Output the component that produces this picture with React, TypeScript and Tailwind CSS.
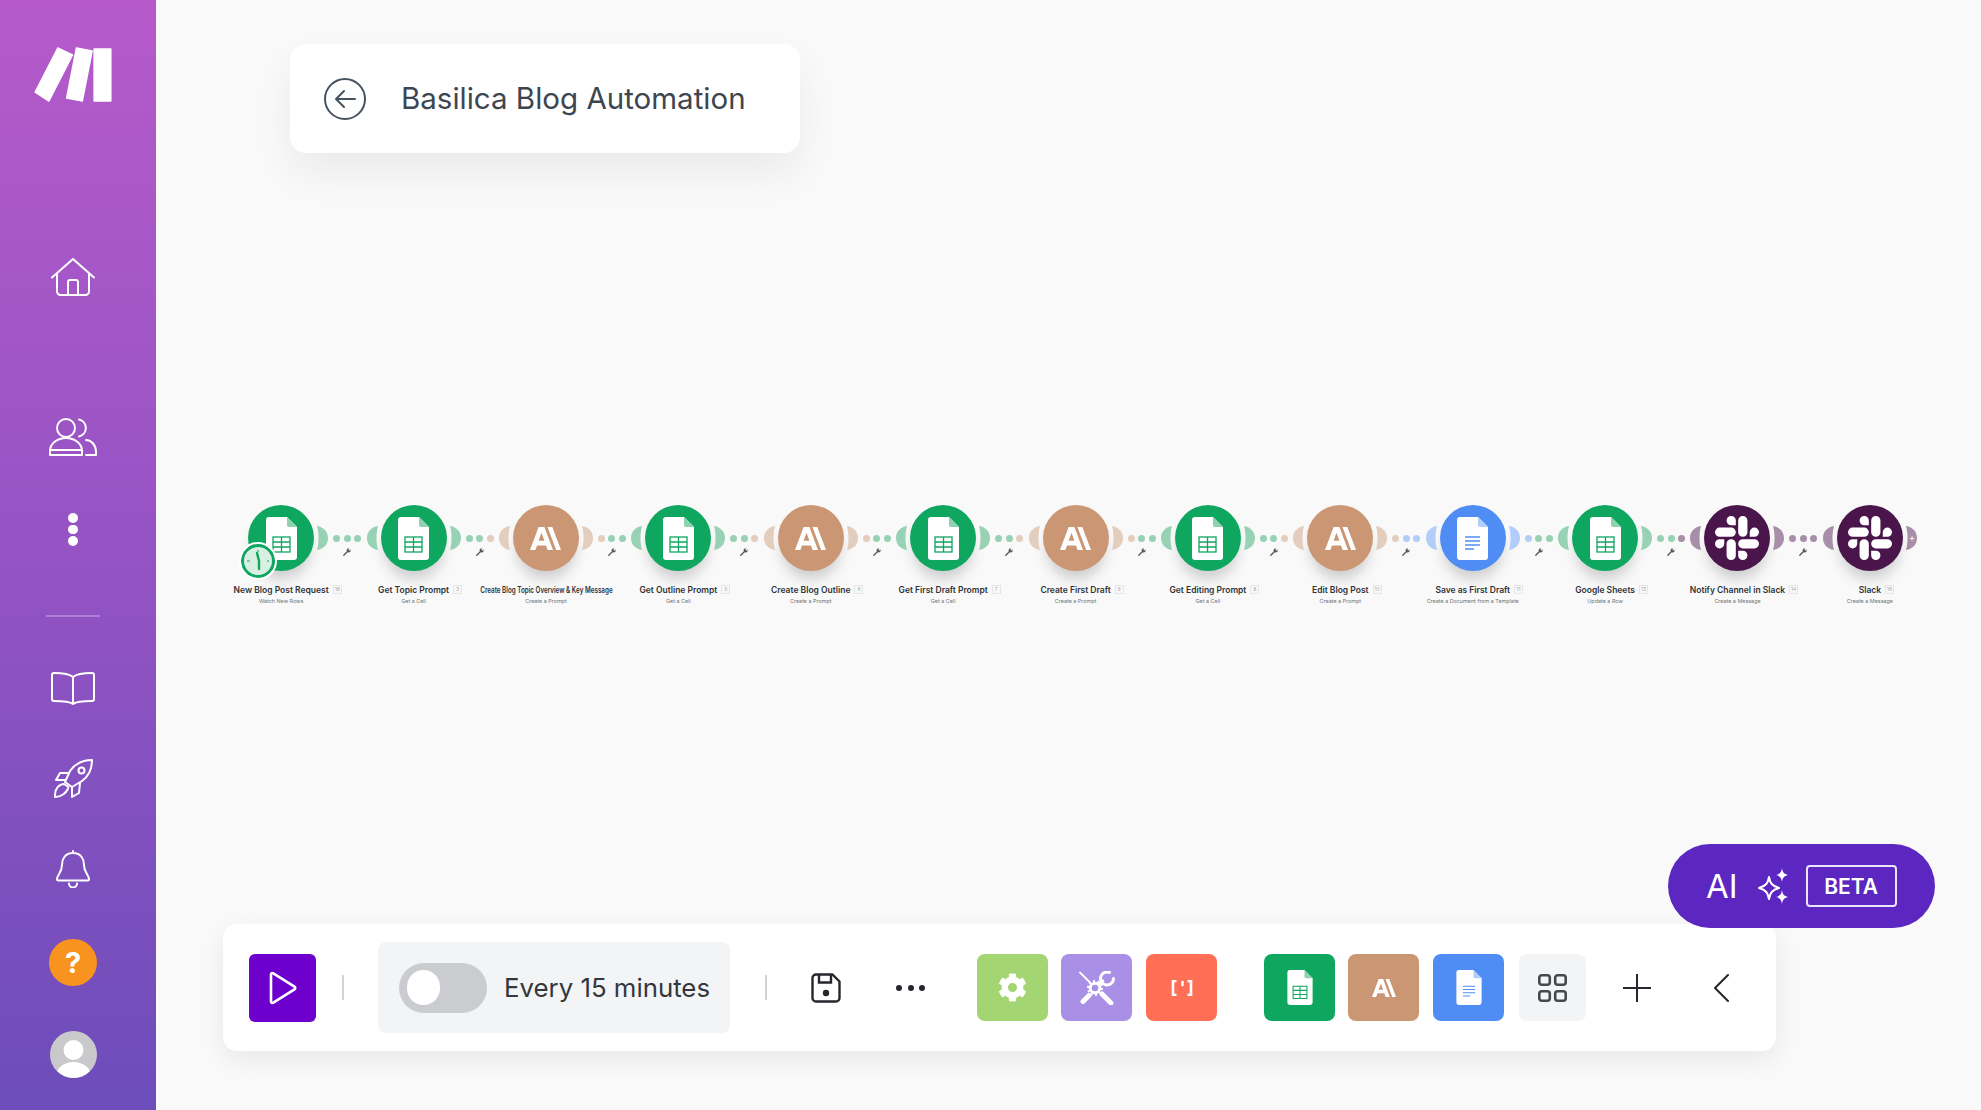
import { FaCog } from "react-icons/fa";
import { SiSlack } from "react-icons/si";

type Kind = "sheets" | "anthropic" | "docs" | "slack";

const KINDS: Record<Kind, { bg: string; light: string; fill: string }> = {
  sheets: { bg: "bg-[#0fa660]", light: "bg-[#98d2b4]", fill: "fill-[#98d2b4]" },
  anthropic: { bg: "bg-[#ca9673]", light: "bg-[#e3cdbd]", fill: "fill-[#e3cdbd]" },
  docs: { bg: "bg-[#4f8df5]", light: "bg-[#b3cdf9]", fill: "fill-[#b3cdf9]" },
  slack: { bg: "bg-[#4a154b]", light: "bg-[#a88fa9]", fill: "fill-[#a88fa9]" },
};

const modules: { title: string; sub: string; badge?: string; kind: Kind; narrow?: boolean }[] = [
  { title: "New Blog Post Request", sub: "Watch New Rows", badge: "18", kind: "sheets" },
  { title: "Get Topic Prompt", sub: "Get a Cell", badge: "3", kind: "sheets" },
  { title: "Create Blog Topic Overview & Key Message", sub: "Create a Prompt", kind: "anthropic", narrow: true },
  { title: "Get Outline Prompt", sub: "Get a Cell", badge: "5", kind: "sheets" },
  { title: "Create Blog Outline", sub: "Create a Prompt", badge: "6", kind: "anthropic" },
  { title: "Get First Draft Prompt", sub: "Get a Cell", badge: "7", kind: "sheets" },
  { title: "Create First Draft", sub: "Create a Prompt", badge: "9", kind: "anthropic" },
  { title: "Get Editing Prompt", sub: "Get a Cell", badge: "8", kind: "sheets" },
  { title: "Edit Blog Post", sub: "Create a Prompt", badge: "10", kind: "anthropic" },
  { title: "Save as First Draft", sub: "Create a Document from a Template", badge: "11", kind: "docs" },
  { title: "Google Sheets", sub: "Update a Row", badge: "13", kind: "sheets" },
  { title: "Notify Channel in Slack", sub: "Create a Message", badge: "14", kind: "slack" },
  { title: "Slack", sub: "Create a Message", badge: "16", kind: "slack" },
];

function SheetIcon({ className }: { className: string }) {
  return (
    <svg viewBox="0 0 31 43" className={className}>
      <path d="M3 0H21L31 10V40a3 3 0 0 1-3 3H3a3 3 0 0 1-3-3V3a3 3 0 0 1 3-3Z" fill="#fff" />
      <path d="M21 0L31 10H23a2 2 0 0 1-2-2Z" fill="#8fd1ae" />
      <g fill="none" stroke="#0fa660" strokeWidth="1.3">
        <rect x="7" y="20" width="17" height="15" />
        <path d="M7 25H24M7 30H24M15.5 20V35" />
      </g>
    </svg>
  );
}

function DocIcon({ className }: { className: string }) {
  return (
    <svg viewBox="0 0 31 43" className={className}>
      <path d="M3 0H21L31 10V40a3 3 0 0 1-3 3H3a3 3 0 0 1-3-3V3a3 3 0 0 1 3-3Z" fill="#fff" />
      <path d="M21 0L31 10H23a2 2 0 0 1-2-2Z" fill="#b3cdf9" />
      <path d="M8 20H23M8 24H23M8 28H23M8 32H17" stroke="#4f8df5" strokeWidth="1.4" />
    </svg>
  );
}

function AnthropicIcon({ className }: { className: string }) {
  return (
    <svg viewBox="0 0 31 23" className={className} fill="#fff">
      <path
        fillRule="evenodd"
        d="M0 23L8.6 0H14.4L23 23H17.6L16 18.4H7L5.4 23ZM8.6 13.8H14.4L11.5 5.8Z"
      />
      <path d="M17.5 0H22.3L31 23H26.2Z" />
    </svg>
  );
}

function Handle({ side, fill }: { side: "left" | "right"; fill: string }) {
  return (
    <svg
      viewBox="0 0 11 24"
      className={`absolute top-[21px] h-6 w-[11px] ${fill} ${side === "left" ? "left-[-14px]" : "right-[-14px]"}`}
    >
      {side === "right" ? <path d="M0 0C7 1 11 6 11 12S7 23 0 24C2 17 2 7 0 0Z" /> : <path d="M11 0C4 1 0 6 0 12S4 23 11 24C9 17 9 7 11 0Z" />}
    </svg>
  );
}

function Wrench() {
  return (
    <svg viewBox="0 0 10 10" className="absolute left-[10px] top-[14px] h-2 w-2">
      <path d="M1 9L6 4" stroke="#555" strokeWidth="1.6" strokeLinecap="round" />
      <path d="M4.6 3.6a2.4 2.4 0 0 1 3.4-2.8L6.6 2.4l1 1L9.2 2a2.4 2.4 0 0 1-3 3.4Z" fill="#555" />
    </svg>
  );
}

function ClockBadge() {
  return (
    <div className="absolute left-[-7px] top-[39px] h-[34px] w-[34px] rounded-full border-[3px] border-[#0fa660] bg-[#d8f0e2] outline-2 outline-white">
      <svg viewBox="0 0 28 28" className="h-full w-full">
        <path d="M13 6L15 14V22" fill="none" stroke="#0fa660" strokeWidth="2.4" strokeLinecap="round" />
        <path d="M14 3V5M25 14H23M3 14H6" stroke="#0fa660" strokeWidth="1" />
      </svg>
    </div>
  );
}

function ModuleCell({ index }: { index: number }) {
  const m = modules[index];
  const next = modules[index + 1];
  const k = KINDS[m.kind];
  const nk = next ? KINDS[next.kind] : null;
  const mid = m.kind === "sheets" ? k.light : nk?.light;
  return (
    <div className="flex w-[132.4px] shrink-0 flex-col items-center">
      <div className="relative h-[66px] w-[66px]">
        {index > 0 && <Handle side="left" fill={k.fill} />}
        <div
          className={`flex h-[66px] w-[66px] items-center justify-center rounded-full ${k.bg} shadow-[0_12px_14px_-4px_rgba(0,0,0,0.18)]`}
        >
          {m.kind === "sheets" && <SheetIcon className="h-[43px] w-[31px]" />}
          {m.kind === "docs" && <DocIcon className="h-[43px] w-[31px]" />}
          {m.kind === "anthropic" && <AnthropicIcon className="h-[23px] w-[31px]" />}
          {m.kind === "slack" && <SiSlack className="h-[44px] w-[44px] text-white" />}
        </div>
        <Handle side="right" fill={k.fill} />
        {index === 0 && <ClockBadge />}
        {index === modules.length - 1 && (
          <span className="absolute right-[-12px] top-[26px] text-[9px] leading-[14px] text-white">+</span>
        )}
        {nk && (
          <div className="absolute left-full top-[29px] ml-[19px] flex h-[8px] w-[28px] items-center justify-between">
            <span className={`h-[7px] w-[7px] rounded-full ${k.light}`} />
            <span className={`h-[7px] w-[7px] rounded-full ${mid}`} />
            <span className={`h-[7px] w-[7px] rounded-full ${nk.light}`} />
            <Wrench />
          </div>
        )}
      </div>
      <div className="relative mt-[13px] whitespace-nowrap text-[8.5px] font-semibold leading-3 text-[#2f3338]">
        {m.narrow ? <span className="inline-block scale-x-[0.74]">{m.title}</span> : m.title}
        {m.badge && (
          <span className="absolute left-full top-[1px] ml-[4px] flex h-[9px] w-[9px] items-center justify-center border border-[#e5e5e5] text-[5px] font-normal leading-none text-[#aaa]">
            {m.badge}
          </span>
        )}
      </div>
      <div className="mt-[1px] whitespace-nowrap text-[5.4px] leading-[8px] text-[#6f7479]">{m.sub}</div>
    </div>
  );
}

function Sidebar() {
  const icon = "fill-none stroke-white stroke-2";
  return (
    <aside className="flex h-full w-[156px] shrink-0 flex-col items-center bg-gradient-to-b from-[#b65aca] via-[#9553c4] to-[#6c4dba] pr-[10px] pt-[47px]">
      {/* logo */}
      <svg viewBox="-1 -1 79 56" className="h-[55px] w-[78px]" fill="#fff" stroke="#fff" strokeWidth="1.5" strokeLinejoin="round">
        <path d="M23 0L38 7L14 54L0 45Z" />
        <path d="M42 0L58 3L48 54L32 51Z" />
        <path d="M60 1H77V54H60Z" />
      </svg>

      <svg viewBox="0 0 44 38" className={`mt-[156px] h-[38px] w-[44px] ${icon}`}>
        <path d="M1 19.500L22 1L43 19.500" strokeLinecap="round" strokeLinejoin="round" />
        <path d="M6 15.500V33.500a3.500 3.500 0 0 0 3.500 3.500H34.500a3.500 3.500 0 0 0 3.500-3.500V15.500" />
        <path d="M17 37V24a2 2 0 0 1 2-2H25a2 2 0 0 1 2 2V37" />
      </svg>

      <svg viewBox="0 0 48 38" className={`mt-[122px] h-[38px] w-[48px] ${icon}`}>
        <circle cx="17" cy="10" r="9" />
        <path d="M30 1.500a8.700 8.700 0 0 1 0 17" strokeLinecap="round" />
        <path d="M1 37V33a16 13 0 0 1 32 0V37ZM1 32H33" strokeLinejoin="round" />
        <path d="M37 22a10 12 0 0 1 10 12V37H37" strokeLinecap="round" strokeLinejoin="round" />
      </svg>

      <div className="mt-[57px] flex flex-col gap-[2px]">
        <span className="h-[9.500px] w-[9.500px] rounded-full bg-white" />
        <span className="h-[9.500px] w-[9.500px] rounded-full bg-white" />
        <span className="h-[9.500px] w-[9.500px] rounded-full bg-white" />
      </div>

      <div className="mt-[69px] h-[2px] w-[54px] bg-[#ffffff44]" />

      <svg viewBox="0 0 44 33" className={`mt-[55px] h-[33px] w-[44px] ${icon}`}>
        <path d="M22 5C18 1.500 12 1 3 1a2 2 0 0 0-2 2V27a2 2 0 0 0 2 2C11 29 18 29 22 32C26 29 33 29 41 29a2 2 0 0 0 2-2V3a2 2 0 0 0-2-2C32 1 26 1.500 22 5ZM22 5V32" strokeLinejoin="round" />
      </svg>

      <svg viewBox="0 0 39 39" className={`mt-[54px] h-[39px] w-[39px] ${icon}`}>
        <path d="M38 1C29 1 21 5 16 12L11 23L18 28L28 22C35 17 38 10 38 1Z" strokeLinejoin="round" />
        <circle cx="27.500" cy="11.500" r="3" />
        <path d="M14 14H6L2 21H11.500M26 24L25 34L18 38V28" strokeLinejoin="round" />
        <path d="M10 25C5 25 1 30 1 35.500V38C7 38 13 34 14.500 28Z" strokeLinejoin="round" />
      </svg>

      <svg viewBox="0 0 34 38" className={`mt-[52px] h-[38px] w-[34px] ${icon}`}>
        <path d="M17 3C9 3 6 9 6 15C6 23 1 25 1 29a1.500 1.500 0 0 0 1.500 1.500H31.500A1.500 1.500 0 0 0 33 29C33 25 28 23 28 15C28 9 25 3 17 3ZM17 1V3" strokeLinejoin="round" strokeLinecap="round" />
        <path d="M13 33.500a4 4 0 0 0 8 0" strokeLinecap="round" />
      </svg>

      <div className="mt-[51px] flex h-[47px] w-[48px] items-center justify-center rounded-full bg-[#f7931e] font-['Inter',sans-serif] text-[29px] font-bold leading-none text-white">
        ?
      </div>

      <div className="mt-[45px] h-[47px] w-[47px] overflow-hidden rounded-full bg-[#c9c9cb]">
        <svg viewBox="0 0 47 47" className="h-full w-full" fill="#fff">
          <circle cx="23.500" cy="19" r="10" />
          <ellipse cx="23.500" cy="44" rx="17" ry="13" />
        </svg>
      </div>
    </aside>
  );
}

function Toolbar() {
  const btn = "flex h-[67px] w-[71px] shrink-0 items-center justify-center rounded-[8px]";
  return (
    <div className="mb-[59px] ml-[67px] mt-auto flex h-[127px] w-[1553px] items-center rounded-[14px] bg-white pl-[26px] shadow-[0_8px_24px_rgba(0,0,0,0.07)]">
      <button className="flex h-[68px] w-[67px] shrink-0 items-center justify-center rounded-[6px] bg-[#6d00cc]">
        <svg viewBox="0 0 28 34" className="h-[34px] w-[28px] fill-none stroke-white stroke-[2.6]">
          <path d="M2 3.500a1.500 1.500 0 0 1 2.300-1.200L25.500 15.700a1.500 1.500 0 0 1 0 2.600L4.300 31.700A1.500 1.500 0 0 1 2 30.500Z" strokeLinejoin="round" />
        </svg>
      </button>
      <div className="ml-[26px] h-[25px] w-[2px] shrink-0 bg-[#d1d5db]" />
      <div className="ml-[34px] flex h-[91px] w-[352px] shrink-0 items-center rounded-[8px] bg-[#f3f4f6] pl-[21px]">
        <div className="flex h-[50px] w-[88px] items-center rounded-full bg-[#cbcccf] pl-[8px]">
          <span className="h-[35px] w-[33px] rounded-full bg-white" />
        </div>
        <span className="ml-[17px] whitespace-nowrap text-[25.8px] leading-none text-[#33373d]">Every 15 minutes</span>
      </div>
      <div className="ml-[35px] h-[25px] w-[2px] shrink-0 bg-[#d1d5db]" />
      <svg viewBox="0 0 30 30" className="ml-[44px] h-[30px] w-[30px] shrink-0 fill-none stroke-[#24272b] stroke-[2.4]">
        <path d="M5 1.500H21.500L28.500 8.500V25a3.500 3.500 0 0 1-3.500 3.500H5A3.500 3.500 0 0 1 1.500 25V5A3.500 3.500 0 0 1 5 1.500Z" strokeLinejoin="round" />
        <path d="M8 2V9.500H20V2" />
        <circle cx="15" cy="20" r="3.200" className="fill-[#24272b]" strokeWidth="0" />
      </svg>
      <div className="ml-[55px] flex w-[29px] shrink-0 justify-between">
        <span className="h-[6px] w-[6px] rounded-full bg-[#24272b]" />
        <span className="h-[6px] w-[6px] rounded-full bg-[#24272b]" />
        <span className="h-[6px] w-[6px] rounded-full bg-[#24272b]" />
      </div>
      <div className={`ml-[52px] ${btn} bg-[#a3d572]`}>
        <FaCog className="h-[29px] w-[29px] text-white" />
      </div>
      <div className={`ml-[13px] ${btn} bg-[#a990e6]`}>
        <svg viewBox="0 0 36 34" className="h-[34px] w-[36px] fill-none stroke-white" strokeLinecap="round">
          <path d="M1 1.500L11 11.500" strokeWidth="1.800" />
          <path d="M23 23L32 32" strokeWidth="5" />
          <path d="M4 30.500L10 24.500" strokeWidth="5" />
          <circle cx="16" cy="17" r="4.800" strokeWidth="3" />
          <circle cx="16" cy="17" r="7" strokeWidth="2" strokeDasharray="2 2.400" strokeLinecap="butt" />
          <path d="M21 12.500L23.500 10" strokeWidth="3.500" />
          <path d="M30.500 1.500A6.500 6.500 0 1 0 34.500 7.500" strokeWidth="3" />
        </svg>
      </div>
      <div className={`ml-[14px] ${btn} bg-[#fe6f55]`}>
        <svg viewBox="0 0 22 16" className="h-[16px] w-[22px] fill-none stroke-white stroke-[2.600]">
          <path d="M5.500 1H2V15H5.500M16.500 1H20V15H16.500" />
          <path d="M11.500 2V5" strokeLinecap="round" />
        </svg>
      </div>
      <div className={`ml-[47px] ${btn} bg-[#0fa660]`}>
        <SheetIcon className="h-[35px] w-[26px]" />
      </div>
      <div className={`ml-[13px] ${btn} bg-[#ca9673]`}>
        <AnthropicIcon className="h-[18px] w-[24px]" />
      </div>
      <div className={`ml-[14px] ${btn} bg-[#4f8df5]`}>
        <DocIcon className="h-[35px] w-[26px]" />
      </div>
      <div className="ml-[15px] flex h-[67px] w-[67px] shrink-0 items-center justify-center rounded-[8px] bg-[#f3f4f6]">
        <svg viewBox="0 0 29 28" className="h-[28px] w-[29px] fill-none stroke-[#45484d] stroke-[2.600]">
          <rect x="1.300" y="1.300" width="10.500" height="9.500" rx="2.500" />
          <rect x="17.200" y="1.300" width="10.500" height="9.500" rx="2.500" />
          <rect x="1.300" y="17.200" width="10.500" height="9.500" rx="2.500" />
          <rect x="17.200" y="17.200" width="10.500" height="9.500" rx="2.500" />
        </svg>
      </div>
      <svg viewBox="0 0 28 28" className="ml-[37px] h-[28px] w-[28px] shrink-0 stroke-[#24272b] stroke-2">
        <path d="M14 0V28M0 14H28" />
      </svg>
      <svg viewBox="0 0 16 28" className="ml-[62px] h-[28px] w-[16px] shrink-0 fill-none stroke-[#24272b] stroke-2">
        <path d="M15 1L2 14L15 27" strokeLinecap="round" strokeLinejoin="round" />
      </svg>
    </div>
  );
}

export default function App() {
  return (
    <div className="flex h-[1110px] w-full overflow-hidden bg-[#f9f9f9] font-['Inter',sans-serif]">
      <Sidebar />
      <main className="relative flex min-w-0 flex-1 flex-col">
        {/* Title */}
        <div className="ml-[134px] mt-[44px] flex h-[109px] w-[510px] shrink-0 items-center rounded-[16px] bg-white pl-[34px] shadow-[0_20px_40px_rgba(0,0,0,0.06)]">
          <svg viewBox="0 0 42 42" className="h-[42px] w-[42px] shrink-0 fill-none stroke-[#46525e] stroke-2">
            <circle cx="21" cy="21" r="20" />
            <path d="M31 21H12M20 13L12 21L20 29" strokeLinecap="round" strokeLinejoin="round" />
          </svg>
          <h1 className="ml-[35px] whitespace-nowrap text-[29.500px] font-normal leading-none text-[#3d4650]">
            Basilica Blog Automation
          </h1>
        </div>

        {/* Scenario modules */}
        <div className="ml-[59px] mt-[352px] flex">
          {modules.map((m, i) => (
            <ModuleCell key={m.title} index={i} />
          ))}
        </div>

        <Toolbar />

        {/* AI button sits over the corner of the toolbar */}
        <div className="absolute left-[1512px] top-[844px] flex h-[84px] w-[267px] items-center rounded-full bg-[#5b27c0] pl-[38px]">
          <span className="text-[33px] font-normal leading-none text-white">AI</span>
          <svg viewBox="0 0 35 36" className="ml-[17px] h-[36px] w-[35px] shrink-0 fill-white">
            <path d="M14 9C15 15 17 18 24 20C17 22 15 25 14 31C13 25 11 22 4 20C11 18 13 15 14 9Z" fill="none" stroke="#fff" strokeWidth="2" strokeLinejoin="round" />
            <path d="M27 0C27.500 4 29 6 33 7C29 8 27.500 10 27 14C26.500 10 25 8 21 7C25 6 26.500 4 27 0Z" />
            <path d="M27 22C27.500 26 29 28 33 29C29 30 27.500 32 27 36C26.500 32 25 30 21 29C25 28 26.500 26 27 22Z" />
          </svg>
          <div className="ml-[16px] flex h-[42px] w-[91px] items-center justify-center rounded-[4px] border-2 border-[#ece4fb] text-[21px] font-semibold leading-none text-white">
            BETA
          </div>
        </div>
      </main>
    </div>
  );
}
